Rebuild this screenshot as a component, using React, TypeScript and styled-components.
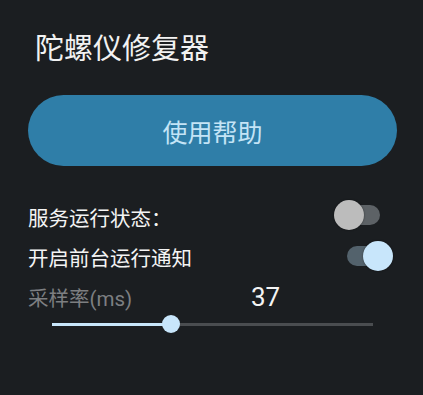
import React, { useState } from 'react'
import styled, { createGlobalStyle } from 'styled-components'

const GlobalStyle = createGlobalStyle`
  html, body {
    margin: 0;
    padding: 0;
    background: #1b1e21;
  }
  body {
    font-family: "Noto Sans CJK SC", Roboto, sans-serif;
  }
`

const Page = styled.div`
  width: 423px;
  height: 395px;
  box-sizing: border-box;
  padding: 26px 26px 0 28px;
  display: flex;
  flex-direction: column;
  background: #1b1e21;
`

const Title = styled.div`
  font-family: "Noto Sans CJK SC", sans-serif;
  font-size: 29px;
  line-height: 40px;
  color: #f2f2f2;
  padding-left: 7px;
`

const HelpButton = styled.button`
  margin-top: 29px;
  height: 71px;
  width: 100%;
  border: none;
  border-radius: 36px;
  background: #2f7ea8;
  color: #c4e4f6;
  font-family: "Noto Sans CJK SC", sans-serif;
  font-size: 25px;
  cursor: pointer;
`

const Settings = styled.div`
  margin-top: 31px;
  display: flex;
  flex-direction: column;
`

const Row = styled.div`
  height: 40px;
  display: flex;
  align-items: center;
  justify-content: space-between;
`

const Label = styled.span<{ $muted?: boolean }>`
  font-family: Roboto, "Noto Sans CJK SC", sans-serif;
  font-size: 20.5px;
  color: ${({ $muted }) => ($muted ? '#7d7f81' : '#f4f4f4')};
`

const SwitchRoot = styled.div<{ $on: boolean; $shift: number }>`
  position: relative;
  width: 41px;
  height: 20px;
  margin-right: ${({ $shift }) => $shift}px;
  margin-top: ${({ $on }) => ($on ? '-2px' : '-4px')};
  border-radius: 10px;
  background: ${({ $on }) => ($on ? '#53626c' : '#5d6266')};
  cursor: pointer;
`

const Thumb = styled.div<{ $on: boolean }>`
  position: absolute;
  top: -5px;
  left: ${({ $on }) => ($on ? '16px' : '-5px')};
  width: 30px;
  height: 30px;
  border-radius: 50%;
  background: ${({ $on }) => ($on ? '#c8e6fb' : '#bcbcbc')};
  box-shadow: 0 0 2px rgba(0, 0, 0, 0.5);
`

const Switch = ({ on, shift, onToggle }: { on: boolean; shift: number; onToggle: () => void }) => (
  <SwitchRoot $on={on} $shift={shift} onClick={onToggle}>
    <Thumb $on={on} />
  </SwitchRoot>
)

const RateRow = styled.div`
  height: 40px;
  display: grid;
  grid-template-columns: 223px auto;
  align-items: center;
`

const Value = styled.span`
  font-family: Roboto, sans-serif;
  font-size: 26px;
  color: #f4f4f4;
`

const SliderWrap = styled.div`
  margin: -3px 0 0 24px;
  width: 321px;
  height: 20px;
  display: flex;
  align-items: center;
  position: relative;
`

const Track = styled.div`
  width: 100%;
  height: 3px;
  background: #4a4d50;
  position: relative;
`

const Fill = styled.div`
  height: 100%;
  background: #c8e6fb;
`

const Knob = styled.div`
  position: absolute;
  top: 50%;
  width: 18px;
  height: 18px;
  margin: -9px 0 0 -9px;
  border-radius: 50%;
  background: #c8e6fb;
`

const App = () => {
  const [service, setService] = useState(false)
  const [notify, setNotify] = useState(true)
  const rate = 37
  const pct = `${rate}%`

  return (
    <Page>
      <GlobalStyle />
      <Title>陀螺仪修复器</Title>
      <HelpButton>使用帮助</HelpButton>
      <Settings>
        <Row>
          <Label>服务运行状态：</Label>
          <Switch on={service} shift={17} onToggle={() => setService(!service)} />
        </Row>
        <Row>
          <Label>开启前台运行通知</Label>
          <Switch on={notify} shift={9} onToggle={() => setNotify(!notify)} />
        </Row>
        <RateRow>
          <Label $muted>采样率(ms)</Label>
          <Value>{rate}</Value>
        </RateRow>
        <SliderWrap>
          <Track>
            <Fill style={{ width: pct }} />
          </Track>
          <Knob style={{ left: pct }} />
        </SliderWrap>
      </Settings>
    </Page>
  )
}

export default App
